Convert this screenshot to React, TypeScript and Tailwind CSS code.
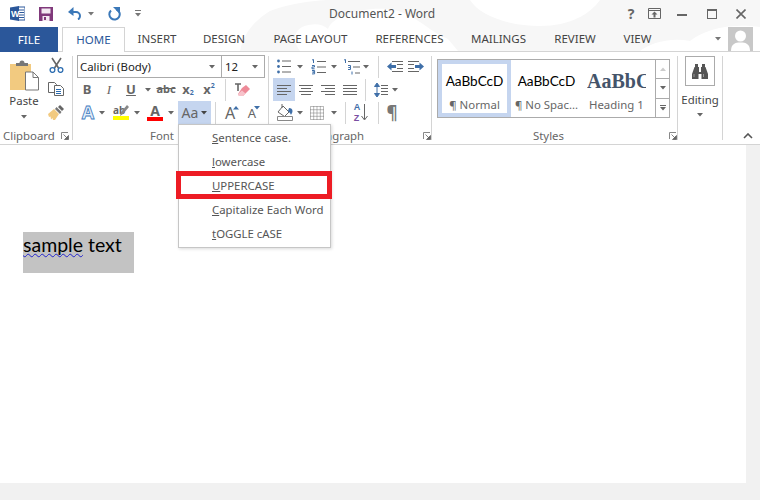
import type { ReactNode } from 'react';

const ui = 'font-["Noto_Sans",sans-serif]';

// small dropdown triangle used all over the ribbon
function Caret({ color = '#666' }: { color?: string }) {
  return (
    <svg width="6" height="4" viewBox="0 0 6 4" className="shrink-0">
      <path d="M0 0h6L3 3.5z" fill={color} />
    </svg>
  );
}

function Cell({ className = '', children }: { className?: string; children?: ReactNode }) {
  return <div className={`flex items-center justify-center shrink-0 h-full ${className}`}>{children}</div>;
}

function Sep({ className = '' }: { className?: string }) {
  return <div className={`w-px h-[22px] bg-[#d4d4d4] shrink-0 ${className}`} />;
}

function Launcher() {
  return (
    <svg width="8" height="8" viewBox="0 0 8 8">
      <path d="M.5 7V.5H7" fill="none" stroke="#888" />
      <path d="M2.5 2.5l3.5 3.5M7.5 3.5v4h-4z" fill="#666" stroke="#666" strokeWidth=".8" />
    </svg>
  );
}

function Lines({ kind }: { kind: 'left' | 'center' | 'right' | 'justify' }) {
  const rows = {
    left: ['M0 1.5h14', 'M0 4.5h10', 'M0 7.5h14', 'M0 10.5h10'],
    center: ['M0 1.5h14', 'M2 4.5h10', 'M0 7.5h14', 'M2 10.5h10'],
    right: ['M0 1.5h14', 'M4 4.5h10', 'M0 7.5h14', 'M4 10.5h10'],
    justify: ['M0 1.5h14', 'M0 4.5h14', 'M0 7.5h14', 'M0 10.5h14'],
  }[kind];
  return (
    <svg width="14" height="12" viewBox="0 0 14 12">
      {rows.map((d) => (
        <path key={d} d={d} stroke="#666" />
      ))}
    </svg>
  );
}

function Bullets() {
  return (
    <svg width="14" height="15" viewBox="0 0 14 15">
      <circle cx="1.5" cy="2" r="1.4" fill="#3f6fa8" />
      <circle cx="1.5" cy="7.5" r="1.4" fill="#3f6fa8" />
      <circle cx="1.5" cy="13" r="1.4" fill="#3f6fa8" />
      <path d="M5 2h9M5 7.5h9M5 13h9" stroke="#666" />
    </svg>
  );
}

function Numbers() {
  return (
    <svg width="15" height="16" viewBox="0 0 15 16">
      <path d="M1 1l1.5-.5V4M1 6.5h2.5v1.5H1v1.8h2.6M1 11.5h2.6v1.6H1.5h2.1v1.8H1" fill="none" stroke="#3f6fa8" />
      <path d="M6 2.5h9M6 8h9M6 13.5h9" stroke="#666" />
    </svg>
  );
}

function Multilevel() {
  return (
    <svg width="17" height="16" viewBox="0 0 17 16">
      <path d="M1 1l1.5-.5V4M5 6.5h2.5v2H5.500h2v2H5" fill="none" stroke="#3f6fa8" />
      <path d="M9 12.500v3" stroke="#3f6fa8" />
      <path d="M5 2.500h12M10 8h7M12 14h5" stroke="#666" />
    </svg>
  );
}

function Indent({ flip }: { flip?: boolean }) {
  return (
    <svg width="16" height="11" viewBox="0 0 16 11" className={flip ? '-scale-x-100' : ''}>
      <path d="M0 5.500l4.500-4v2.500H9v3H4.500v2.500z" fill="#3f6fa8" />
      <path d="M5 .5h11M10 3.500h6M10 7.500h6M5 10.500h11" stroke="#666" />
    </svg>
  );
}

function Paste() {
  return (
    <svg width="29" height="31" viewBox="0 0 29 31">
      <path d="M0 4h21v26H0z" fill="#f2ca80" />
      <path d="M6 6V3h3.500a2.500 2.500 0 0 1 5 0H18v3z" fill="#777" />
      <path d="M15.500 12H23l5.500 5.500V30h-13z" fill="#fff" stroke="#777" />
      <path d="M23 12v5.500h5.500" fill="none" stroke="#777" />
    </svg>
  );
}

function Scissors() {
  return (
    <svg width="15" height="16" viewBox="0 0 15 16">
      <path d="M3 1l6.500 10M12 1L5.500 11" stroke="#666" strokeWidth="1.6" />
      <circle cx="3.500" cy="13" r="2.400" fill="none" stroke="#2b6cb0" strokeWidth="1.300" />
      <circle cx="11.500" cy="13" r="2.400" fill="none" stroke="#2b6cb0" strokeWidth="1.300" />
    </svg>
  );
}

function Copy() {
  return (
    <svg width="16" height="14" viewBox="0 0 16 14">
      <path d="M.5.5h6l2 2v8h-8z" fill="#fff" stroke="#666" />
      <path d="M6.500 3.500h6l3 3v7h-9z" fill="#fff" stroke="#666" />
      <path d="M8 7.500h5M8 9.500h5M8 11.500h5" stroke="#2b6cb0" />
    </svg>
  );
}

function Brush() {
  return (
    <svg width="16" height="15" viewBox="0 0 16 15">
      <path d="M0 9l6-5 5 5-4 6H5l-.5-2L3 14.500l-.5-3L1 12z" fill="#f2ca80" />
      <path d="M7 4l5 5 1.500-2-5-5z" fill="#777" />
      <path d="M10 2l2-2 4 4-2 2z" fill="#666" />
    </svg>
  );
}

function Binoculars() {
  return (
    <svg width="16" height="15" viewBox="0 0 16 15">
      <path d="M3 0h3v3H3zM10 0h3v3h-3z" fill="#555" />
      <path d="M2.500 3h4.500v5h2V3h4.500L16 10v5H9.500v-5h-3v5H0v-5z" fill="#555" />
      <path d="M2 10v3M11.500 10v3" stroke="#999" />
    </svg>
  );
}

function Eraser() {
  return (
    <svg width="16" height="16" viewBox="0 0 16 16">
      <path d="M1 2h6M4 2v7" stroke="#666" strokeWidth="1.600" />
      <path d="M8 6l4-3 4 4-7 7H5l-1-2z" fill="#ee8a98" />
      <path d="M4 12l1 2h4l2.500-2.500-3.500-3z" fill="#f7c3cb" />
    </svg>
  );
}

function Shading() {
  return (
    <svg width="16" height="17" viewBox="0 0 16 17">
      <path d="M1 8l5-6 6 6-4.500 4.500z" fill="#fff" stroke="#666" />
      <path d="M5 0v4" stroke="#666" />
      <path d="M12 4c2 0 3.500 1 3.500 3s-1 2.500-1.500 4c-.5-2-2-3-3-4z" fill="#3f6fa8" />
      <path d="M.5 12.500h15v4H.5z" fill="#fff" stroke="#888" />
    </svg>
  );
}

function Borders() {
  return (
    <svg width="14" height="14" viewBox="0 0 14 14">
      <path d="M.5.5h13v13H.5zM.5 7h13M7 .5v13M.5 3.700h13M.5 10.300h13M3.700.5v13M10.300.5v13" fill="none" stroke="#777" strokeDasharray="1 1" />
    </svg>
  );
}

function LineSpacing() {
  return (
    <svg width="14" height="16" viewBox="0 0 14 16">
      <path d="M3 1L.5 4.500h5zM3 15L.5 11.500h5zM3 4v8" fill="#3f6fa8" stroke="#3f6fa8" />
      <path d="M7 3.500h7M7 6.500h7M7 9.500h7M7 12.500h7" stroke="#666" />
    </svg>
  );
}

function StatusArrow({ down }: { down?: boolean }) {
  return (
    <svg width="6" height="4" viewBox="0 0 6 4" className="absolute top-[1px] right-[-2px]">
      <path d={down ? 'M0 0h6L3 3.500z' : 'M3 0l3 3.500H0z'} fill="#3f6fa8" />
    </svg>
  );
}

function TitleBar() {
  return (
    <div className={`relative flex items-center h-[27px] text-[12px] text-[#555] ${ui}`}>
      <Cell className="w-[10px]" />
      <svg width="15" height="15" viewBox="0 0 15 15" className="shrink-0">
        <path d="M8 1h7v13H8z" fill="#fff" stroke="#2b579a" />
        <path d="M9 4h5M9 6.500h5M9 9h5M9 11.500h5" stroke="#2b579a" />
        <path d="M0 1.500L9 0v15L0 13.500z" fill="#2b579a" />
        <text x="1" y="11" fontSize="9" fontWeight="700" fill="#fff" fontFamily="Liberation Sans">W</text>
      </svg>
      <Cell className="w-[14px]" />
      <svg width="14" height="14" viewBox="0 0 14 14" className="shrink-0">
        <path d="M0 0h14v14H0z" fill="#80397b" />
        <path d="M2.500 1.500h9v5h-9z" fill="#f3e9f2" />
        <path d="M3.500 9h7v5h-7z" fill="#f3e9f2" />
        <path d="M5 10h2v3H5z" fill="#80397b" />
      </svg>
      <Cell className="w-[15px]" />
      <svg width="14" height="13" viewBox="0 0 14 13" className="shrink-0">
        <path d="M1.500 5H8a4 4 0 0 1 4 4c0 2-1 3-2 3.500" fill="none" stroke="#3b78b8" strokeWidth="2" />
        <path d="M5.500 0v9L0 5z" fill="#3b78b8" />
      </svg>
      <Cell className="w-[6px]" />
      <Caret color="#777" />
      <Cell className="w-[14px]" />
      <svg width="13" height="14" viewBox="0 0 13 14" className="shrink-0">
        <path d="M8.500 2.500a5.200 5.200 0 1 1-5.500 1" fill="none" stroke="#3b78b8" strokeWidth="2" />
        <path d="M5 0h7v7z" fill="#3b78b8" />
      </svg>
      <Cell className="w-[14px]" />
      <svg width="6" height="7" viewBox="0 0 6 7" className="shrink-0">
        <path d="M0 .5h6" stroke="#777" />
        <path d="M0 3h6L3 6.500z" fill="#777" />
      </svg>
      <div className="w-[188px] shrink-0" />
      <span className="w-[102px] shrink-0 whitespace-nowrap">Document2 - Word</span>
      <div className="w-[194px] shrink-0" />
      <span className="w-[12px] shrink-0 text-center font-bold text-[14px] text-[#666]">?</span>
      <Cell className="w-[11px]" />
      <svg width="13" height="11" viewBox="0 0 13 11" className="shrink-0">
        <path d="M.5.5h12v10H.5zM.5 2.500h12" fill="none" stroke="#666" />
        <path d="M6.500 3.500l3 3h-2v3h-2v-3h-2z" fill="#666" />
      </svg>
      <Cell className="w-[16px]" />
      <div className="w-[10px] h-[2px] bg-[#666] shrink-0 mt-[2px]" />
      <Cell className="w-[20px]" />
      <div className="w-[10px] h-[10px] border border-t-2 border-[#666] shrink-0" />
      <Cell className="w-[19px]" />
      <svg width="10" height="10" viewBox="0 0 10 10" className="shrink-0">
        <path d="M.5.500l9 9M9.500.5l-9 9" stroke="#666" strokeWidth="1.600" />
      </svg>
    </div>
  );
}

function Tabs() {
  return (
    <div className={`relative flex h-[25px] border-b border-[#d4d4d4] text-[11.500px] text-[#444] ${ui}`}>
      <div className="w-[58px] h-[25px] bg-[#2b579a] text-white flex items-center justify-center shrink-0">FILE</div>
      <div className="w-[4px] shrink-0" />
      <div className="w-[63px] h-[25px] bg-white border border-b-0 border-[#d4d4d4] text-[#2b579a] flex items-center justify-center shrink-0">HOME</div>
      <Cell className="w-[64px]">INSERT</Cell>
      <Cell className="w-[70px]">DESIGN</Cell>
      <Cell className="w-[103px] whitespace-nowrap">PAGE LAYOUT</Cell>
      <Cell className="w-[95px]">REFERENCES</Cell>
      <Cell className="w-[83px]">MAILINGS</Cell>
      <Cell className="w-[70px]">REVIEW</Cell>
      <Cell className="w-[55px]">VIEW</Cell>
      <div className="flex-1" />
      <Cell className="w-[10px]"><Caret color="#777" /></Cell>
      <div className="w-[5px] shrink-0" />
      <div className="w-[25px] h-[24px] bg-[#c8c8c8] overflow-hidden shrink-0">
        <svg width="25" height="24" viewBox="0 0 25 24">
          <circle cx="12.500" cy="9" r="5.500" fill="#fff" />
          <path d="M3 24c0-7 4-8.500 9.500-8.500S22 17 22 24z" fill="#fff" />
        </svg>
      </div>
      <div className="w-[7px] shrink-0" />
    </div>
  );
}

function GroupDivider() {
  return <div className="w-px bg-[#d4d4d4] my-[4px] shrink-0" />;
}

function GroupLabel({ className = '', children }: { className?: string; children: ReactNode }) {
  return <div className={`flex items-center h-[16px] shrink-0 text-[#666] ${className}`}>{children}</div>;
}

function Clipboard() {
  return (
    <div className="w-[72px] shrink-0 flex flex-col">
      <div className="flex h-[72px] shrink-0">
        <div className="w-[48px] shrink-0 flex flex-col items-center pt-[8px]">
          <Paste />
          <span className="mt-[1px] leading-[17px]">Paste</span>
          <div className="mt-[6px]"><Caret /></div>
        </div>
        <div className="flex flex-col items-center w-[16px] shrink-0 pt-[5px] gap-[9px]">
          <Scissors />
          <Copy />
          <Brush />
        </div>
      </div>
      <GroupLabel className="mt-[4px] pl-[3px]">
        <span className="w-[58px]">Clipboard</span>
        <Launcher />
      </GroupLabel>
    </div>
  );
}

function FontGroup() {
  return (
    <div className="w-[195px] shrink-0 flex flex-col">
      <div className="flex h-[23px] shrink-0 mt-[3px] pl-[4px]">
        <div className="w-[145px] h-[23px] border border-[#ababab] flex items-center justify-between pl-[2px] pr-[6px] text-[#222] shrink-0">
          <span>Calibri (Body)</span>
          <Caret />
        </div>
        <div className="w-[43px] h-[23px] border border-l-0 border-[#ababab] flex items-center justify-between pl-[3px] pr-[6px] text-[#222] shrink-0">
          <span>12</span>
          <Caret />
        </div>
      </div>
      <div className="flex items-center h-[23px] shrink-0 pl-[4px] text-[#666]">
        <Cell className="w-[20px] font-bold text-[13px]">B</Cell>
        <Cell className="w-[24px] italic text-[13px] font-['Liberation_Serif',serif]">I</Cell>
        <Cell className="w-[20px] font-bold underline text-[13px]">U</Cell>
        <Cell className="w-[14px]"><Caret /></Cell>
        <Cell className="w-[22px] line-through text-[11px] font-bold">abc</Cell>
        <Cell className="w-[22px] font-bold text-[13px]">x<span className="text-[7px] mt-[7px] text-[#3f6fa8]">2</span></Cell>
        <Cell className="w-[20px] font-bold text-[13px]">x<span className="text-[7px] mb-[7px] text-[#3f6fa8]">2</span></Cell>
        <div className="w-[6px] shrink-0" />
        <Sep />
        <Cell className="w-[32px]"><Eraser /></Cell>
      </div>
      <div className="flex items-center h-[23px] shrink-0 pl-[4px] text-[#666]">
        <Cell className="w-[22px] font-bold text-[18px] text-[#e4eefa] [-webkit-text-stroke:0.8px_#3f7cc0]">A</Cell>
        <Cell className="w-[6px]"><Caret /></Cell>
        <div className="w-[6px] shrink-0" />
        <Cell className="w-[20px]">
          <div className="relative flex flex-col items-center">
            <span className="text-[10px] leading-[11px] font-bold self-start">ab</span>
            <svg width="9" height="11" viewBox="0 0 9 11" className="absolute right-[0px] top-[0px]">
              <path d="M7 0l2 2-6 7-3 2 1-4z" fill="#888" />
            </svg>
            <div className="w-[16px] h-[4px] bg-[#ffff00]" />
          </div>
        </Cell>
        <Cell className="w-[12px]"><Caret /></Cell>
        <Cell className="w-[24px]">
          <div className="flex flex-col items-center">
            <span className="text-[14px] leading-[13px] font-bold">A</span>
            <div className="w-[16px] h-[4px] bg-[#ff0000]" />
          </div>
        </Cell>
        <Cell className="w-[8px]"><Caret /></Cell>
        <div className="w-[3px] shrink-0" />
        <div className="w-[33px] h-[23px] bg-[#c5d5ef] flex items-center justify-center gap-[3px] text-[14px] shrink-0">
          <span>Aa</span>
          <Caret color="#444" />
        </div>
        <div className="w-[4px] shrink-0" />
        <Sep />
        <Cell className="w-[30px]">
          <div className="relative text-[16px] leading-[16px] pr-[2px]">A<StatusArrow /></div>
        </Cell>
        <Cell className="w-[14px]">
          <div className="relative text-[13px] leading-[16px] pr-[2px]">A<StatusArrow down /></div>
        </Cell>
      </div>
      <GroupLabel className="mt-[4px] pl-[77px]">Font</GroupLabel>
    </div>
  );
}

function ParagraphGroup() {
  return (
    <div className="w-[162px] shrink-0 flex flex-col">
      <div className="flex items-center h-[23px] shrink-0 mt-[3px] pl-[5px]">
        <Cell className="w-[20px]"><Bullets /></Cell>
        <Cell className="w-[12px]"><Caret /></Cell>
        <Cell className="w-[24px]"><Numbers /></Cell>
        <Cell className="w-[8px]"><Caret /></Cell>
        <div className="w-[2px] shrink-0" />
        <Cell className="w-[22px]"><Multilevel /></Cell>
        <Cell className="w-[8px]"><Caret /></Cell>
        <div className="w-[8px] shrink-0" />
        <Sep />
        <div className="w-[5px] shrink-0" />
        <Cell className="w-[21px]"><Indent /></Cell>
        <Cell className="w-[22px]"><Indent flip /></Cell>
      </div>
      <div className="flex items-center h-[23px] shrink-0 pl-[4px]">
        <Cell className="w-[22px] bg-[#c5d5ef]"><Lines kind="left" /></Cell>
        <Cell className="w-[22px]"><Lines kind="center" /></Cell>
        <Cell className="w-[22px]"><Lines kind="right" /></Cell>
        <Cell className="w-[22px]"><Lines kind="justify" /></Cell>
        <div className="w-[4px] shrink-0" />
        <Sep />
        <div className="w-[6px] shrink-0" />
        <Cell className="w-[18px]"><LineSpacing /></Cell>
        <Cell className="w-[10px]"><Caret /></Cell>
      </div>
      <div className="flex items-center h-[23px] shrink-0 pl-[4px]">
        <Cell className="w-[24px]"><Shading /></Cell>
        <Cell className="w-[6px]"><Caret /></Cell>
        <Cell className="w-[28px]"><Borders /></Cell>
        <Cell className="w-[6px]"><Caret /></Cell>
        <div className="w-[8px] shrink-0" />
        <Sep />
        <Cell className="w-[30px]">
          <div className="flex items-center">
            <div className="flex flex-col text-[9px] leading-[11px] font-bold font-['Liberation_Sans',sans-serif]">
              <span className="text-[#3f6fa8]">A</span>
              <span className="text-[#7b4fa3]">Z</span>
            </div>
            <svg width="7" height="17" viewBox="0 0 7 17" className="ml-[1px]">
              <path d="M3.500 0v15M.5 12l3 4 3-4" fill="none" stroke="#666" />
            </svg>
          </div>
        </Cell>
        <div className="w-[2px] shrink-0" />
        <Sep />
        <Cell className="w-[26px] text-[17px] font-bold text-[#777]">¶</Cell>
      </div>
      <GroupLabel className="mt-[4px] pl-[39px]">
        <span className="w-[115px]">Paragraph</span>
        <Launcher />
      </GroupLabel>
    </div>
  );
}

function StyleItem({ sample, label, className = '' }: { sample: ReactNode; label: string; className?: string }) {
  return (
    <div className={`shrink-0 flex flex-col items-center overflow-hidden ${className}`}>
      <div className="h-[37px] pt-[5px] flex items-center justify-center whitespace-nowrap">{sample}</div>
      <span className="text-[#666] whitespace-nowrap leading-[16px]">{label}</span>
    </div>
  );
}

function Styles() {
  const plain = <span className="text-[13.600px] text-black font-['Lato',sans-serif]">AaBbCcD</span>;
  return (
    <div className="w-[245px] shrink-0 flex flex-col">
      <div className="flex h-[59px] shrink-0 mt-[7px] ml-[5px] w-[233px] border border-[#ababab]">
        <div className="w-[73px] shrink-0 border-[4px] border-[#c5d5ef]">
          <StyleItem className="w-[65px] mt-[-4px]" sample={plain} label="¶ Normal" />
        </div>
        <StyleItem className="w-[71px]" sample={plain} label="¶ No Spac..." />
        <div className="w-[73px] shrink-0 pl-[5px]">
          <div className="w-[59px] h-[37px] overflow-hidden">
            <div className="h-[37px] pt-[5px] flex items-center whitespace-nowrap text-[20px] font-bold text-[#44546a] font-['Liberation_Serif',serif]">AaBbCcD</div>
          </div>
          <div className="pl-[2px] text-[#666] whitespace-nowrap leading-[16px]">Heading 1</div>
        </div>
        <div className="flex-1 flex flex-col border-l border-[#ababab]">
          <Cell className="flex-1"><div className="rotate-180"><Caret color="#ccc" /></div></Cell>
          <Cell className="flex-1 border-y border-[#ababab]"><Caret /></Cell>
          <Cell className="flex-1 flex-col gap-[1px]"><div className="w-[6px] h-px bg-[#666]" /><Caret /></Cell>
        </div>
      </div>
      <GroupLabel className="mt-[10px]">
        <span className="ml-[101px] w-[136px]">Styles</span>
        <Launcher />
      </GroupLabel>
    </div>
  );
}

function Editing() {
  return (
    <div className="w-[44px] shrink-0 flex flex-col items-center pt-[4px]">
      <div className="w-[30px] h-[30px] border border-[#ababab] flex items-center justify-center">
        <Binoculars />
      </div>
      <span className="mt-[5px] leading-[17px]">Editing</span>
      <div className="mt-[5px]"><Caret /></div>
    </div>
  );
}

function CaseMenu() {
  const items = [
    ['S', 'entence case.'],
    ['l', 'owercase'],
    ['U', 'PPERCASE'],
    ['C', 'apitalize Each Word'],
    ['t', 'OGGLE cASE'],
  ];
  return (
    <div className={`absolute left-[178px] top-[124px] w-[153px] h-[124px] bg-white border border-[#c6c6c6] shadow-[1px_1px_3px_rgba(0,0,0,0.15)] py-[1px] text-[11.400px] text-[#555] ${ui}`}>
      {items.map(([key, rest]) => (
        <div key={key} className="h-[24px] pl-[33px] flex items-center whitespace-nowrap">
          <span className="underline">{key}</span>
          {rest}
        </div>
      ))}
    </div>
  );
}

export default function App() {
  return (
    <div className="relative w-[760px] h-[500px] overflow-hidden bg-[#f1f1f1]">
      <div className="bg-white">
        <div className="relative">
          {/* faint cloud backdrop behind the title bar */}
          <svg width="760" height="51" viewBox="0 0 760 51" className="absolute left-0 top-0">
            <path d="M240 51c4-18 14-30 30-40 20-8 50-12 70-11h420v51z" fill="#f7f7f7" />
            <path d="M300 51c-6-8-8-18 2-24 10-4 20-4 26 2 4-12 30-22 60-20 24 2 40 22 60 30l10 12zM470 0h130c-10 14-30 26-60 26-30 0-60-10-70-26zM640 51c10-8 30-14 50-10 16-12 40-18 70-14v24z" fill="#fff" />
          </svg>
          <TitleBar />
          <Tabs />
        </div>
        <div className={`flex h-[93px] border-b border-[#d4d4d4] text-[11.400px] text-[#444] ${ui}`}>
          <Clipboard />
          <GroupDivider />
          <FontGroup />
          <GroupDivider />
          <ParagraphGroup />
          <GroupDivider />
          <Styles />
          <GroupDivider />
          <Editing />
          <GroupDivider />
          <div className="flex-1 flex items-end justify-end pr-[7px] pb-[5px]">
            <svg width="10" height="6" viewBox="0 0 10 6">
              <path d="M1 5l4-4 4 4" fill="none" stroke="#555" strokeWidth="1.600" />
            </svg>
          </div>
        </div>
      </div>

      <div className="w-[746px] h-[338px] bg-white pl-[23px] pt-[87px]">
        <div className="w-[111px] h-[41px] bg-[#c3c3c3] font-['Lato',sans-serif] text-[19.500px] leading-[25px] text-black">
          <span className="underline decoration-wavy decoration-[#2222cc] decoration-1 [text-decoration-skip-ink:none]">sample</span> text
        </div>
      </div>

      <CaseMenu />
      {/* red highlight around the UPPERCASE item */}
      <div className="absolute left-[176px] top-[171px] w-[156px] h-[28px] border-[5px] border-[#ed1c24]" />
    </div>
  );
}
